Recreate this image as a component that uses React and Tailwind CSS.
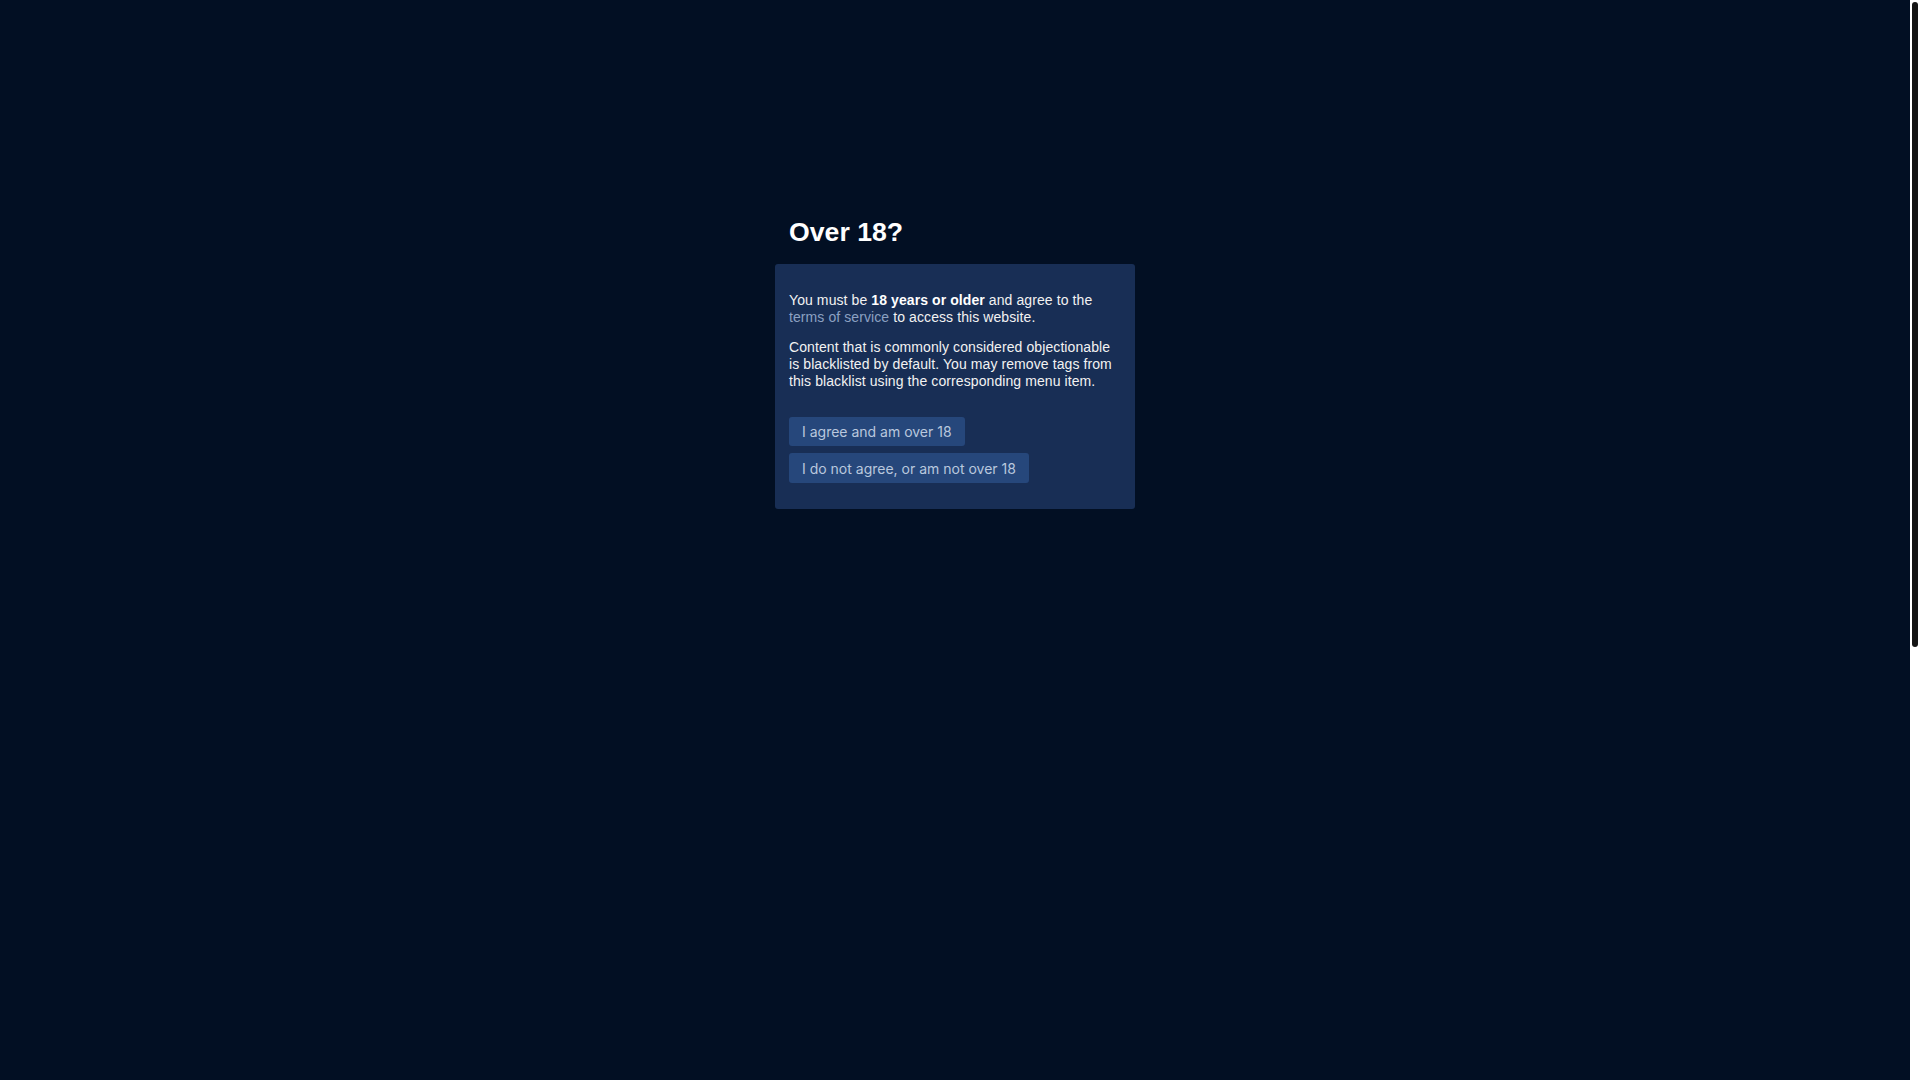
import React from "react";

const AgeGate = () => {
  return (
    <div className="w-[360px] mx-auto pt-[216px]">
      <h1 className="px-[14px] mb-[16px] text-[26.67px] leading-[32px] font-bold text-white font-['Liberation_Sans',Arial,sans-serif]">
        Over 18?
      </h1>
      <div className="bg-[#182e55] rounded-[3px] px-[14px] pt-[28px] pb-[26px] text-[14px] leading-[17px] tracking-[0.09px] text-[#f2f2f2] font-['Liberation_Sans',Arial,sans-serif]">
        <p className="mb-[13px]">
          You must be <b className="font-bold text-white">18 years or older</b> and agree to the{" "}
          <a href="#" className="text-[#8ca1c2]">
            terms of service
          </a>{" "}
          to access this website.
        </p>
        <p>
          Content that is commonly considered objectionable is blacklisted by default. You may
          remove tags from this blacklist using the corresponding menu item.
        </p>
        {/* Accept / decline */}
        <div className="mt-[27px] flex flex-col items-start gap-[7px] tracking-normal">
          <button className="h-[29px] px-[13px] rounded-[3px] bg-[#26477b] text-[#b9c8de] text-[14px] font-['Inter',sans-serif]">
            I agree and am over 18
          </button>
          <button className="h-[30px] px-[13px] rounded-[3px] bg-[#26477b] text-[#b9c8de] text-[14px] font-['Inter',sans-serif]">
            I do not agree, or am not over 18
          </button>
        </div>
      </div>
    </div>
  );
};

// page scrollbar: white track with a dark inset thumb
const Scrollbar = () => (
  <div className="w-[10px] shrink-0 bg-white p-[2px]">
    <div className="h-[645px] rounded-[3px] bg-[#141414]" />
  </div>
);

export default function App() {
  return (
    <div className="flex h-screen bg-[#020f23]">
      <main className="flex-1">
        <AgeGate />
      </main>
      <Scrollbar />
    </div>
  );
}
